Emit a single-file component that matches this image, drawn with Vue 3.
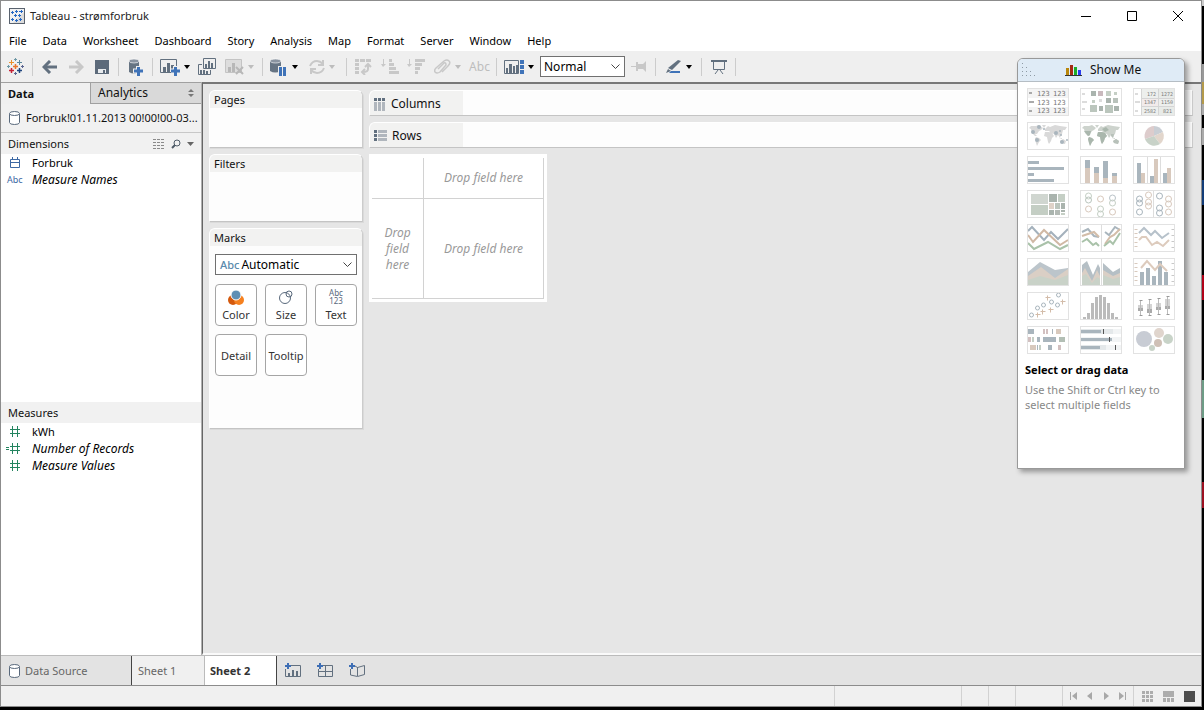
<script setup>
import { ref } from 'vue'

const menus = ['File', 'Data', 'Worksheet', 'Dashboard', 'Story', 'Analysis', 'Map', 'Format', 'Server', 'Window', 'Help']
const fit = ref('Normal')
const mark = ref('Automatic')

const S = '#a9b5bd'
const T = '#d8c9bd'
const G = '#c5cfc5'
const D = '#aab4ae'
const R = '#d2c0c0'
const L = '#dcdcdc'

const world = 'M2 6L4 4L9 4L12 3L16 6L14 8L12 9L10 12L8 12L10 14L8 14L5 11L4 7ZM15 3L19 3L17 6ZM9 15L12 16L14 18L12 20L10 24L9 21L8 17ZM18 10L22 10L25 11L27 14L25 16L24 19L22 22L21 20L20 15L17 14ZM18 9L18 7L21 4L23 5L28 3L33 4L40 5L38 8L36 8L35 12L34 13L33 16L31 13L29 16L27 12L24 11L22 9ZM33 19L36 17L39 19L38 22L34 21ZM32 16L35 16L35 17Z'

const ring = (x, y, s) => ({ x, y, r: 3, s })
const plus = (x, y) => ({ d: `M${x - 2} ${y}H${x + 3}M${x} ${y - 2}V${y + 3}`, s: '#d3bca9' })

const charts = [
  { name: 'text table', rects: [[1, 1, 40, 9, '#f4f4f4'], [1, 19, 40, 8, '#f4f4f4'], [2, 4, 3, 2, '#aaa'], [2, 13, 5, 2, '#aaa'], [2, 22, 3, 2, '#aaa']],
    texts: [[10, 8, '123'], [26, 8, '123'], [10, 17, '123'], [26, 17, '123'], [10, 25, '123'], [26, 25, '123']] },
  { name: 'heat map', rects: [[2, 5, 3, 2, L], [2, 13, 5, 2, L], [2, 20, 3, 2, L], [11, 3, 5, 5, D], [18, 3, 5, 5, '#c9b9bd'], [26, 3, 5, 5, G], [34, 4, 3, 3, G], [12, 12, 3, 3, G], [19, 11, 3, 3, L], [26, 10, 5, 5, D], [33, 10, 5, 5, '#b9c2bb'], [10, 17, 7, 7, '#bbc6bd'], [19, 18, 4, 5, D], [25, 17, 8, 8, '#bbc6bd'], [34, 18, 5, 5, D]] },
  { name: 'highlight table', rects: [[2, 5, 3, 2, L], [2, 13, 5, 2, L], [2, 22, 3, 2, L], [9, 1, 16, 9, '#edefed'], [26, 1, 15, 9, '#e8ebe8'], [9, 11, 16, 7, '#f2ebeb'], [26, 11, 15, 7, '#edefed'], [9, 19, 16, 8, '#edefed'], [26, 19, 15, 8, '#e8ebe8'], [8, 1, 1, 26, '#d5d5d5'], [25, 1, 1, 26, '#d5d5d5'], [8, 10, 33, 1, '#d5d5d5'], [8, 18, 33, 1, '#d5d5d5']],
    small: [[14, 8, '172'], [28, 8, '1272'], [11, 16, '1347'], [28, 16, '1150'], [11, 25, '2582'], [30, 25, '821']] },
  { name: 'symbol map', paths: [{ d: world, f: '#d9d9d9' }], circles: [[6, 10, 2, S], [12, 5, 2, S], [17, 7, 1, S], [10, 18, 2, S], [29, 11, 2, S], [33, 9, 1, S], [34, 13, 1, S], [35, 20, 2, S], [40, 18, 1, S]] },
  { name: 'filled map', paths: [{ d: world, f: '#cdd3cd' }, { d: 'M9 15L12 16L14 18L12 20L10 24L9 21L8 17ZM18 10L22 10L25 11L27 14L25 16L24 19L22 22L21 20L20 15L17 14ZM22 7L26 5L29 8L25 10ZM4 9L11 9L10 13L8 14Z', f: '#aab7ad' }, { d: 'M33 19L36 17L39 19L38 22L34 21ZM31 12L34 12L33 16L31 14Z', f: '#b8c1ba' }] },
  { name: 'pie chart', paths: [{ d: 'M21 14L12 17A10 10 0 0 1 21 4Z', f: '#ddcccc' }, { d: 'M21 14L21 4A10 10 0 0 1 30 10Z', f: '#c9ced4' }, { d: 'M21 14L30 10A10 10 0 0 1 27 22Z', f: '#e2d6cc' }, { d: 'M21 14L27 22A10 10 0 0 1 12 17Z', f: '#c8d2c8' }] },
  { name: 'horizontal bars', rects: [[1, 5, 11, 3, S], [1, 11, 36, 3, S], [1, 17, 6, 3, S], [1, 23, 26, 3, S]] },
  { name: 'stacked bars', rects: [[5, 4, 5, 8, S], [5, 12, 5, 15, T], [14, 11, 5, 6, S], [14, 17, 5, 10, T], [23, 5, 5, 17, S], [23, 22, 5, 5, T], [32, 17, 5, 3, S], [32, 20, 5, 7, T]] },
  { name: 'side-by-side bars', rects: [[4, 7, 4, 20, S], [8, 17, 4, 10, T], [14, 1, 1, 26, '#ddd'], [17, 20, 4, 7, S], [21, 3, 4, 24, T], [27, 1, 1, 26, '#ddd'], [30, 17, 4, 10, S], [34, 12, 4, 15, T]] },
  { name: 'treemap', rects: [[4, 4, 17, 10, '#d0d6d0'], [4, 15, 17, 10, '#c4cec4'], [22, 4, 8, 8, D], [31, 4, 7, 8, G], [22, 13, 5, 6, '#dfd2c8'], [28, 13, 5, 6, '#bcc5bd'], [34, 13, 4, 6, D], [22, 20, 5, 5, D], [28, 20, 5, 5, '#b3bab5'], [34, 20, 4, 2, D], [34, 23, 4, 2, G]] },
  { name: 'circle views', rings: [ring(8, 6, G), ring(8, 10, '#b9c5bd'), ring(8, 19, T), ring(20, 9, T), ring(20, 19, G), ring(20, 24, G), ring(32, 8, '#b9c2c7'), ring(32, 13, G), ring(32, 22, T)] },
  { name: 'side-by-side circles', rects: [[20, 1, 1, 26, '#ddd']], rings: [ring(6, 9, S), ring(6, 13, S), ring(6, 22, S), ring(15, 5, T), ring(15, 12, T), ring(15, 16, T), ring(26, 6, S), ring(26, 18, S), ring(26, 23, S), ring(35, 9, T), ring(35, 14, T), ring(35, 22, T)] },
  { name: 'continuous lines', paths: [{ d: 'M1 7L5 3L17 16L24 8L31 15L41 5', s: '#a4b1bc', w: 1 }, { d: 'M1 11L6 18L17 6L33 21L41 16', s: '#d0b8a4', w: 1 }, { d: 'M1 19L7 25L21 18L33 25L41 21', s: '#a9c2a9', w: 1 }] },
  { name: 'discrete lines', rects: [[21, 1, 1, 26, '#ddd']], paths: [{ d: 'M2 8L8 5L14 12L19 13M25 8L29 11L35 3L40 6', s: S, w: 1 }, { d: 'M2 12L14 8L19 13M25 20L30 13L34 11L40 5', s: '#d3bda9', w: 1 }, { d: 'M2 18L7 15L13 21L16 19L19 22M24 22L30 17L33 20L40 9', s: '#a9c2a9', w: 1 }] },
  { name: 'dual lines', paths: [{ d: 'M6 9L11 4L18 11L22 7L29 14L36 9', s: '#b6c1ca', w: 1 }, { d: 'M6 16L9 13L13 13L19 21L24 18L30 22L36 16', s: '#ddcbbd', w: 1 }, { d: 'M1 5H4M1 9H4M1 13H4M1 18H4M1 22H4', s: T }, { d: 'M38 5H41M38 11H41M38 17H41M38 23H41', s: '#c8c8c8' }] },
  { name: 'continuous area', paths: [{ d: 'M1 14L13 4L28 12L41 10V27H1Z', f: '#bcc5cb' }, { d: 'M1 18L14 9L28 20L41 11V27H1Z', f: '#dacfc5' }, { d: 'M1 22L13 18L28 22L41 17V27H1Z', f: '#c9d2c8' }] },
  { name: 'discrete area', rects: [[21, 1, 1, 26, '#ddd']], paths: [{ d: 'M2 7L7 3L13 17L18 6L20 10V27H2ZM23 5L33 14L40 10V27H23Z', f: '#b5bfc5' }, { d: 'M2 15L5 10L12 23L17 12L20 18V27H2ZM23 12L33 18L40 15V27H23Z', f: '#dacfc5' }, { d: 'M2 18L6 16L12 25L17 19L20 21V27H2ZM23 17L33 21L40 19V27H23Z', f: '#c9d2c8' }] },
  { name: 'dual combination', rects: [[7, 14, 4, 13, S], [13, 10, 4, 17, S], [19, 18, 4, 9, S], [25, 3, 4, 24, S], [31, 14, 4, 13, S]], paths: [{ d: 'M8 10L14 3L22 12L27 6L34 13', s: '#ddcbbd', w: 1 }, { d: 'M1 5H4M1 9H4M1 13H4M1 18H4M1 22H4', s: T }, { d: 'M38 5H41M38 11H41M38 17H41M38 23H41', s: '#c8c8c8' }] },
  { name: 'scatter plot', rings: [{ x: 4, y: 23, r: 2, s: S }, { x: 10, y: 16, r: 2, s: S }, { x: 16, y: 13, r: 2, s: S }, { x: 24, y: 10, r: 2, s: S }, { x: 30, y: 13, r: 2, s: S }, { x: 31, y: 3, r: 2, s: S }], paths: [plus(20, 5), plus(35, 9), plus(15, 19), plus(23, 17), plus(10, 22)] },
  { name: 'histogram', rects: [[3, 25, 3, 2, '#bbb'], [7, 21, 3, 6, '#bbb'], [11, 11, 3, 16, '#bbb'], [15, 5, 3, 22, '#bbb'], [19, 3, 3, 24, '#bbb'], [23, 5, 3, 22, '#bbb'], [27, 11, 3, 16, '#bbb'], [31, 21, 3, 6, '#bbb'], [35, 25, 3, 2, '#bbb']] },
  { name: 'box-and-whisker plot', paths: [{ d: 'M7 8V23M16 7V23M25 6V22M34 4V22', s: '#bbb' }, { d: 'M6 8H9M15 7H18M24 6H27M33 4H36M6 23H9M15 23H18M24 22H27M33 22H36', s: '#999' }], rects: [[5, 13, 5, 3, '#d4d4d4'], [5, 16, 5, 3, '#aaa'], [14, 12, 5, 5, '#d4d4d4'], [14, 17, 5, 4, '#aaa'], [23, 11, 5, 4, '#d4d4d4'], [23, 15, 5, 3, '#aaa'], [32, 7, 5, 7, '#d4d4d4'], [32, 14, 5, 3, '#aaa']] },
  { name: 'gantt', rects: [[1, 3, 6, 5, S], [16, 3, 2, 5, R], [19, 3, 2, 5, R], [25, 3, 1, 5, S], [29, 3, 5, 5, T], [1, 11, 3, 5, R], [5, 11, 2, 5, G], [10, 11, 3, 5, S], [16, 11, 13, 5, S], [32, 11, 6, 5, '#b3bfb5'], [3, 19, 6, 5, T], [10, 19, 1, 5, S], [12, 19, 2, 5, G], [21, 19, 4, 5, S], [31, 19, 3, 5, R]] },
  { name: 'bullet graph', rects: [[1, 3, 40, 5, '#f2f4f5'], [1, 3, 32, 5, '#e4e8ea'], [1, 4, 20, 3, S], [23, 3, 1, 5, '#555'], [1, 11, 40, 5, '#f2f4f5'], [1, 12, 31, 3, S], [29, 11, 1, 5, '#555'], [1, 19, 40, 5, '#f2f4f5'], [1, 19, 25, 5, '#e4e8ea'], [1, 20, 19, 3, S], [35, 19, 1, 5, '#555']] },
  { name: 'packed bubbles', circles: [[11, 13, 8, '#c8ccd4'], [26, 7, 5, '#e0d5cd'], [35, 13, 5, '#c8d3c8'], [25, 17, 4, '#cfc0b6'], [19, 22, 3, '#c8d3c8']] }
]
</script>

<template>
  <div class="window">
    <header class="title">
      <svg class="app" width="16" height="16" viewBox="0 0 16 16"><rect x=".5" y=".5" width="15" height="15" fill="#f0f0f0" stroke="#59626e" /><path d="M15 4V15H4Z" fill="#dcdcdc" /><path d="M2 4.500H5M3.500 3V6M6 3.500H9M7.500 2V5M10 3.500H14M12.500 2V5M5 7.500H8M6.500 6V9M9 7.500H12M10.500 6V9M2 11.500H5M3.500 10V13M6 12.500H9M7.500 11V14M10 11.500H13M11.500 10V13" stroke="#2467c4" /></svg>
      <h1>Tableau - strømforbruk</h1>
      <div class="controls">
        <button aria-label="Minimize"><svg width="10" height="10"><path d="M0 5.500H10" stroke="#000" /></svg></button>
        <button aria-label="Maximize"><svg width="10" height="10"><path d="M.5.5H9.500V9.500H.5Z" stroke="#000" fill="none" /></svg></button>
        <button aria-label="Close"><svg width="10" height="10"><path d="M0 0L10 10M10 0L0 10" stroke="#000" /></svg></button>
      </div>
    </header>

    <nav class="menu"><button v-for="m in menus" :key="m">{{ m }}</button></nav>

    <div class="toolbar" role="toolbar">
      <button aria-label="Start page"><svg width="17" height="17" viewBox="0 0 17 17" fill="none" stroke-width="1"><path d="M6 8.500H11M8.500 6V11" stroke="#e8762c" stroke-width="1.500" /><path d="M2 4.500H7M4.500 2V7" stroke="#eb912c" /><path d="M10 4.500H15M12.500 2V7" stroke="#5b879b" /><path d="M2 12.500H7M4.500 10V15" stroke="#c72035" stroke-width="1.500" /><path d="M10 12.500H15M12.500 10V15" stroke="#1f457e" stroke-width="1.500" /><path d="M7 1.500H10M8.500 0V3" stroke="#7099a6" /><path d="M7 15.500H10M8.500 14V17" stroke="#5b6591" /><path d="M0 8.500H3M1.500 7V10" stroke="#7099a6" /><path d="M14 8.500H17M15.500 7V10" stroke="#5b6591" /></svg></button>
      <i></i>
      <button aria-label="Undo"><svg width="16" height="14" fill="none" stroke="#62707f" stroke-width="3"><path d="M2 7H15" /><path d="M8 1L2 7L8 13" /></svg></button>
      <button aria-label="Redo"><svg width="16" height="14" fill="none" stroke="#c8c8c8" stroke-width="3"><path d="M1 7H14" /><path d="M8 1L14 7L8 13" /></svg></button>
      <button aria-label="Save"><svg width="14" height="14"><path d="M0 0H14V14H0Z" fill="#5c6a7a" /><path d="M3 9H11V13H3Z" fill="#e8ebee" /><path d="M8 10H10V13H8Z" fill="#5c6a7a" /></svg></button>
      <i></i>
      <button aria-label="New data source"><svg width="17" height="18"><path d="M2 3V14Q7 17 12 14V3Z" fill="#667483" /><ellipse cx="7" cy="3" rx="5" ry="2" fill="#8993a0" stroke="#fff" stroke-width=".6" /><path d="M6 13H17M11.500 8V18" stroke="#efefef" stroke-width="5" /><path d="M7 13H16M11.500 9V18" stroke="#3f73b8" stroke-width="3" /></svg></button>
      <i></i>
      <button aria-label="New worksheet"><svg width="20" height="18"><path d="M.5 1.500H16.500V14.500H.5Z" fill="none" stroke="#62707f" /><path d="M3 9H6V14H3ZM7 5H10V14H7ZM11 7H14V14H11Z" fill="#62707f" /><path d="M11 13H20M15.500 8V18" stroke="#efefef" stroke-width="5" /><path d="M11 13H20M15.500 9V18" stroke="#3f73b8" stroke-width="3" /></svg><b class="caret"></b></button>
      <button aria-label="Duplicate"><svg width="18" height="17"><path d="M5.500.5H17.500V10.500H5.500ZM4 6.500H.5V16.500H12.500V12" fill="none" stroke="#62707f" /><path d="M7 6H9V10H7ZM10 3H12V10H10ZM13 5H15V10H13ZM2 12H4V16H2ZM5 12H7V16H5ZM8 13H10V16H8Z" fill="#62707f" /></svg></button>
      <button aria-label="Clear sheet"><svg width="19" height="18"><path d="M.5 1.500H16.500V14.500H.5Z" fill="#ddd" stroke="#c4c4c4" /><path d="M3 9H6V14H3ZM7 5H10V14H7Z" fill="#b8b8b8" /><path d="M11 9L18 16M18 9L11 16" stroke="#b8b8b8" stroke-width="2" /></svg><b class="caret off"></b></button>
      <i></i>
      <button aria-label="Pause updates"><svg width="18" height="18"><path d="M0 3V13Q5 16 11 13V3Z" fill="#667483" /><ellipse cx="5.500" cy="3" rx="5.500" ry="2" fill="#8993a0" stroke="#fff" stroke-width=".6" /><path d="M8 8H17V18H8Z" fill="#efefef" /><path d="M9 9H12V18H9ZM13 9H16V18H13Z" fill="#3f73b8" /></svg><b class="caret"></b></button>
      <button class="start" aria-label="Refresh"><svg width="16" height="16" fill="none" stroke="#c8c8c8" stroke-width="2"><path d="M1 7Q3 2 8 2Q11 2 14 5M14 1V6H9M15 9Q13 14 8 14Q5 14 2 11M2 15V10H7" /></svg><b class="caret off"></b></button>
      <i></i>
      <button aria-label="Swap"><svg width="17" height="16" fill="#c8c8c8"><path d="M0 0H4V3H0ZM5 0H10V3H5ZM11 0H16V3H11ZM0 4H4V7H0ZM0 8H4V11H0ZM0 12H4V15H0Z" /><path d="M13 7V10Q13 13 8 13M10 8L13 5L16 8M10 10L7 13L10 16" fill="none" stroke="#c8c8c8" stroke-width="2" /></svg></button>
      <button aria-label="Sort ascending"><svg width="18" height="15" fill="#c8c8c8"><path d="M2 0H3V5H5L2 8L0 5H2ZM8 0H11V3H8ZM8 4H13V7H8ZM8 8H15V11H8ZM8 12H18V15H8Z" /></svg></button>
      <button aria-label="Sort descending"><svg width="18" height="15" fill="#c8c8c8"><path d="M2 0H3V5H5L2 8L0 5H2ZM8 0H18V3H8ZM8 4H15V7H8ZM8 8H13V11H8ZM8 12H11V15H8Z" /></svg></button>
      <button aria-label="Group members"><svg width="17" height="16" fill="none" stroke="#c8c8c8" stroke-width="1.500"><path d="M4 10L10 4Q12 3 12 6L6 13Q3 15 1 13Q0 11 2 9L10 2Q13 0 15 2Q17 4 14 7L8 13" /></svg><b class="caret off"></b></button>
      <button class="disabled" disabled>Abc</button>
      <i></i>
      <button aria-label="Show Me cards"><svg width="20" height="14"><path d="M.5.5H14.500V13.500H.5Z" fill="none" stroke="#62707f" /><path d="M2 8H4V13H2ZM5 4H8V13H5ZM9 6H11V13H9ZM12 5H14V13H12Z" fill="#62707f" /><path d="M16 0H20V4H16ZM16 5H20V9H16ZM16 10H20V14H16Z" fill="#3f73b8" /></svg><b class="caret"></b></button>
      <div class="select fit">
        <select v-model="fit" aria-label="Fit"><option>Normal</option><option>Fit Width</option><option>Entire View</option></select>
        <svg width="9" height="6"><path d="M.5.5L4.500 4.500L8.500.5" fill="none" stroke="#444" /></svg>
      </div>
      <button aria-label="Fix axes"><svg width="16" height="11" fill="#c8c8c8"><path d="M0 5H5V1H7V3H12L15 0V11L12 8H7V10H5V6H0Z" /></svg></button>
      <i></i>
      <button aria-label="Highlight"><svg width="16" height="15"><path d="M2 9L12 1L15 2L6 11Z" fill="#62707f" /><path d="M0 14L2 10L5 12Z" fill="#62707f" /><path d="M5 12H14V14H3Z" fill="#3f73b8" /></svg><b class="caret"></b></button>
      <i></i>
      <button aria-label="Presentation mode"><svg width="16" height="15" fill="none" stroke="#62707f"><path d="M0 2H16" stroke-width="2" /><path d="M2.500 3V10.500H13.500V3M7 11L4 15M9 11L12 15" /></svg></button>
      <i></i>
    </div>

    <div class="body">
      <aside>
        <div class="tabs">
          <button class="on">Data</button>
          <button class="big">Analytics <svg width="6" height="8" fill="#777"><path d="M0 3L3 0L6 3ZM0 5L3 8L6 5Z" /></svg></button>
        </div>
        <div class="source">
          <svg width="11" height="14" fill="#fff" stroke="#59697c"><path d="M.5 2.500V11.500Q.5 13.500 5.500 13.500Q10.500 13.500 10.500 11.500V2.500" /><ellipse cx="5.500" cy="2.500" rx="5" ry="2" /></svg>
          <span>Forbruk!01.11.2013 00!00!00-03...</span>
        </div>
        <section class="dims">
          <h2>Dimensions
            <span class="tools">
              <svg width="12" height="10"><path d="M0 .5H12M0 3.500H12M0 6.500H12M0 9.500H12" stroke="#8a8a8a" stroke-dasharray="3 1" /></svg>
              <svg width="10" height="10" fill="none" stroke="#4f5b68"><circle cx="6" cy="4" r="3" /><path d="M4 6L1 9" stroke-width="2" /></svg>
              <svg width="7" height="4"><path d="M0 0H7L3.500 4Z" fill="#666" /></svg>
            </span>
          </h2>
          <ul>
            <li><svg width="10" height="11" fill="none" stroke="#3c68a4"><path d="M.5 2.500H9.500V10.500H.5ZM0 5.500H10M2.500 0V2M7.500 0V2" /></svg>Forbruk</li>
            <li class="it"><small>Abc</small>Measure Names</li>
          </ul>
        </section>
        <section>
          <h2>Measures</h2>
          <ul>
            <li v-for="(m, i) in ['kWh', 'Number of Records', 'Measure Values']" :key="m" :class="{ it: i }">
              <svg width="14" height="11" stroke="#23845f"><path d="M4 3.500H14M4 7.500H14M6.500 0V11M11.500 0V11" /><path v-if="i === 1" d="M0 4.500H3M0 6.500H3" /></svg>{{ m }}
            </li>
          </ul>
        </section>
      </aside>

      <main>
        <div class="cards">
          <section class="card pages"><h2>Pages</h2></section>
          <section class="card filters"><h2>Filters</h2></section>
          <section class="card marks">
            <h2>Marks</h2>
            <div class="select type">
              <span>Abc</span>
              <select v-model="mark" aria-label="Mark type"><option>Automatic</option><option>Bar</option><option>Line</option></select>
              <svg width="9" height="6"><path d="M.5.5L4.500 4.500L8.500.5" fill="none" stroke="#444" /></svg>
            </div>
            <div class="buttons">
              <button><svg width="16" height="15"><circle cx="5" cy="10" r="5" fill="#d4590d" /><circle cx="11" cy="10" r="5" fill="#f5801f" /><circle cx="8" cy="5" r="5" fill="#5f8fb4" stroke="#fff" /></svg>Color</button>
              <button><svg width="14" height="15" fill="none" stroke="#59697c"><circle cx="6" cy="8" r="5.500" /><circle cx="10" cy="4" r="3" /></svg>Size</button>
              <button><span class="abc">Abc</span><span class="abc last">123</span>Text</button>
              <button>Detail</button>
              <button>Tooltip</button>
            </div>
          </section>
        </div>
        <div class="view">
          <div class="shelf"><h2><svg width="12" height="13"><path d="M0 0H3V3H0ZM4 0H7V3H4ZM8 0H11V3H8Z" fill="#62707f" /><path d="M0 4H3V13H0ZM4 4H7V13H4ZM8 4H11V13H8Z" fill="#b0b6bd" /></svg>Columns</h2></div>
          <div class="shelf"><h2><svg width="13" height="12"><path d="M0 0H3V3H0ZM0 4H3V7H0ZM0 8H3V11H0Z" fill="#62707f" /><path d="M4 0H13V3H4ZM4 4H13V7H4ZM4 8H13V11H4Z" fill="#b0b6bd" /></svg>Rows</h2></div>
          <div class="canvas"><div></div><div>Drop field here</div><div>Drop field here</div><div>Drop field here</div></div>
        </div>
      </main>
    </div>

    <nav class="sheets">
      <button class="ds"><svg width="11" height="14" fill="#fff" stroke="#59697c"><path d="M.5 2.500V11.500Q.5 13.500 5.500 13.500Q10.500 13.500 10.500 11.500V2.500" /><ellipse cx="5.500" cy="2.500" rx="5" ry="2" /></svg>Data Source</button>
      <button class="s1">Sheet 1</button>
      <button class="s2">Sheet 2</button>
      <button class="add" aria-label="New worksheet tab"><svg width="16" height="15"><path d="M6 2.500H15.500V13.500H.5V6" fill="none" stroke="#62707f" /><path d="M3 10H5V13H3ZM7 7H9V13H7ZM11 8H13V13H11Z" fill="#62707f" /><path d="M0 3H6M3 0V6" stroke="#3f6fb5" stroke-width="2" /></svg></button>
      <button class="add" aria-label="New dashboard"><svg width="16" height="15"><path d="M6 2.500H15.500V13.500H1.500V6M1 8.500H15M8.500 3V13" fill="none" stroke="#62707f" /><path d="M0 3H6M3 0V6" stroke="#3f6fb5" stroke-width="2" /></svg></button>
      <button class="add" aria-label="New story"><svg width="16" height="15"><path d="M6 3L8.500 4.500L15.500 2.500V11.500L8.500 13.500L1.500 12V6M8.500 4V13" fill="none" stroke="#62707f" /><path d="M0 3H6M3 0V6" stroke="#3f6fb5" stroke-width="2" /></svg></button>
    </nav>

    <footer>
      <span class="wide"></span><span></span><span></span><span class="mid"></span>
      <div class="pager">
        <button aria-label="First"><svg width="8" height="8" fill="#a8a8a8"><path d="M0 0H1V8H0ZM7 0V8L2 4Z" /></svg></button>
        <button aria-label="Previous"><svg width="8" height="8" fill="#a8a8a8"><path d="M6 0V8L1 4Z" /></svg></button>
        <button aria-label="Next"><svg width="8" height="8" fill="#a8a8a8"><path d="M2 0V8L7 4Z" /></svg></button>
        <button aria-label="Last"><svg width="8" height="8" fill="#a8a8a8"><path d="M1 0V8L6 4ZM7 0H8V8H7Z" /></svg></button>
      </div>
      <div class="modes">
        <button aria-label="Sheet sorter"><svg width="11" height="11" fill="#adadad"><path d="M0 0H3V3H0ZM4 0H7V3H4ZM8 0H11V3H8ZM0 4H3V7H0ZM4 4H7V7H4ZM8 4H11V7H8ZM0 8H3V11H0ZM4 8H7V11H4ZM8 8H11V11H8Z" /></svg></button>
        <button aria-label="Filmstrip"><svg width="11" height="11" fill="#adadad"><path d="M0 0H11V6H0ZM0 7H3V11H0ZM4 7H7V11H4ZM8 7H11V11H8Z" /></svg></button>
        <button aria-label="Tabs"><svg width="11" height="11"><path d="M0 0H11V11H0Z" fill="#4d4d4d" /></svg></button>
      </div>
    </footer>

    <section class="showme">
      <h2>
        <svg class="grip" width="15" height="14" fill="#8f9ba5"><path d="M0 0H1V1H0ZM0 4H1V5H0ZM4 4H5V5H4ZM0 8H1V9H0ZM4 8H5V9H4ZM8 8H9V9H8ZM0 12H1V13H0ZM4 12H5V13H4ZM8 12H9V13H8ZM12 12H13V13H12Z" /></svg>
        <svg width="17" height="13"><path d="M1 4H4V11H1Z" fill="#b8860b" /><path d="M5 1H8V11H5Z" fill="#a52a12" /><path d="M9 3H12V11H9Z" fill="#1fae2a" /><path d="M13 6H16V11H13Z" fill="#2a3cf0" /><path d="M0 11.500H17" stroke="#333" /></svg>
        Show Me
      </h2>
      <div class="thumbs">
        <button v-for="c in charts" :key="c.name" :aria-label="c.name">
          <svg width="42" height="28" viewBox="0 0 42 28">
            <rect v-for="(r, i) in c.rects" :key="'r' + i" :x="r[0]" :y="r[1]" :width="r[2]" :height="r[3]" :fill="r[4]" />
            <path v-for="(p, i) in c.paths" :key="'p' + i" :d="p.d" :fill="p.f || 'none'" :stroke="p.s || 'none'" :stroke-width="p.w ? 2 : 1" :transform="p.s && !p.w ? 'translate(.5 .5)' : null" />
            <circle v-for="(o, i) in c.circles" :key="'c' + i" :cx="o[0]" :cy="o[1]" :r="o[2]" :fill="o[3]" />
            <circle v-for="(o, i) in c.rings" :key="'o' + i" :cx="o.x + 0.5" :cy="o.y" :r="o.r" fill="none" :stroke="o.s" />
            <text v-for="(t, i) in c.texts" :key="'t' + i" :x="t[0]" :y="t[1]" class="num">{{ t[2] }}</text>
            <text v-for="(t, i) in c.small" :key="'s' + i" :x="t[0]" :y="t[1]" class="num tiny">{{ t[2] }}</text>
            <rect x=".5" y=".5" width="41" height="27" fill="none" stroke="#e2e2e2" />
          </svg>
        </button>
      </div>
      <h3>Select or drag data</h3>
      <p>Use the Shift or Ctrl key to select multiple fields</p>
    </section>
  </div>
</template>

<style>
html { background: #000; }
body {
  min-height: 100vh;
  background: linear-gradient(#ccc 0 6px, #000 6px 64px, #999 64px 82px, #b49a4a 82px 104px, #aaa 104px 115px, #000 115px 128px, #aaa 128px 145px, #000 145px 180px, #123c78 180px 205px, #000 205px 275px, #b00018 275px 300px, #000 300px 380px, #6d9c86 380px 418px, #000 418px 482px, #9c1020 482px 508px, #000 508px);
}
</style>

<style scoped>
* { box-sizing: border-box; margin: 0; padding: 0; font-family: "Noto Sans", "Open Sans", sans-serif; }
button { border: 0; background: none; font-size: 11px; line-height: 16px; color: inherit; display: flex; align-items: center; justify-content: center; white-space: nowrap; }
svg { display: block; flex: none; }
h1, h2 { font-size: 11px; font-weight: 400; }
ul { list-style: none; }
.window { position: relative; display: flex; flex-direction: column; height: calc(100vh - 3px); margin-right: 2px; border: 1px solid #8c8c8c; background: #fff; font-size: 11px; line-height: 16px; color: #111; }
.title { display: flex; align-items: center; height: 30px; padding-left: 8px; }
.title h1 { margin-left: 5px; color: #222; }
.controls { display: flex; margin-left: auto; }
.controls button { width: 46px; height: 28px; }
.menu { display: flex; height: 20px; padding-left: 8px; gap: 16px; color: #000; }
.toolbar { display: grid; height: 31px; background: #efefef; align-items: center; grid-template-columns: 29px 5px 29px 24px 28px 5px 29px 5px 40px 24px 41px 5px 38px 41px 5px 28px 26px 26px 36px 29px 5px 40px 86px 28px 5px 41px 5px 29px 5px; }
.toolbar .start { justify-content: flex-start; padding-left: 6px; }
.toolbar i { justify-self: center; width: 1px; height: 18px; background: #ccc; }
.caret { margin-left: 4px; border: 3px solid transparent; border-top: 4px solid #000; border-bottom: 0; }
.caret.off { border-top-color: #bdbdbd; }
.disabled { font-size: 12px; color: #bdbdbd; }
.select { position: relative; display: flex; align-items: center; border: 1px solid #707070; background: #fff; }
.select select { flex: 1; min-width: 0; height: 100%; border: 0; background: none; appearance: none; font-size: 12px; color: #000; }
.select svg { position: absolute; right: 4px; top: 7px; pointer-events: none; }
.fit { height: 21px; margin-left: 1px; }
.fit select { padding-left: 3px; }
.body { flex: 1; display: flex; min-height: 0; }
aside { display: flex; flex-direction: column; width: 201px; border-right: 1px solid #b0b0b0; }
.tabs { display: flex; height: 22px; background: #efefef; }
.tabs button { flex: 1; justify-content: space-between; padding: 0 7px; background: #d9d9d9; border: 1px solid #a0a0a0; border-right: 0; }
.tabs .big { font-size: 12px; }
.tabs .on { flex: none; width: 89px; font-weight: 700; background: #f0f0f0; border-width: 1px 0 0; }
.source { display: flex; align-items: center; gap: 6px; height: 29px; padding-left: 8px; background: #f1f1f1; border-bottom: 1px solid #c8c8c8; white-space: nowrap; }
.dims { flex: 1; }
aside h2 { display: flex; align-items: center; height: 21px; padding: 0 7px; background: #f1f1f1; }
aside section:last-child { height: 253px; }
.tools { display: flex; align-items: center; gap: 6px; margin-left: auto; }
li { display: grid; grid-template-columns: 16px auto; column-gap: 12px; align-items: center; justify-content: start; height: 17px; padding-left: 3px; color: #000; }
li svg { justify-self: end; }
li small { padding-left: 3px; font-size: 9px; color: #3c68a4; }
.it { font-size: 12px; font-style: italic; }
.it small { font-style: normal; }
main { flex: 1; display: flex; gap: 6px; min-width: 0; padding: 6px 8px 6px 6px; background: #e6e6e6; border-left: 1px solid #666; border-top: 2px solid #777; border-bottom: 2px solid #fafafa; }
.cards { display: flex; flex-direction: column; gap: 6px; width: 154px; flex: none; }
.card { background: #fdfdfd; border: 1px solid #fff; border-right-color: #ccc; border-bottom-color: #c4c4c4; border-radius: 6px 6px 0 0; box-shadow: 1px 1px 0 #dadada; }
.card h2 { height: 17px; padding: 1px 0 0 4px; background: #f2f2f1; border-radius: 5px 5px 0 0; }
.pages { height: 58px; }
.filters { height: 68px; }
.marks { height: 201px; }
.type { margin: 8px 5px 9px; height: 21px; }
.type span { padding-left: 4px; color: #5a8aac; font-weight: 500; }
.type select { padding-left: 2px; }
.buttons { display: flex; flex-wrap: wrap; gap: 8px; padding-left: 5px; }
.buttons button { flex-direction: column; width: 42px; height: 42px; padding-top: 2px; border: 1px solid #a5a5a5; border-radius: 4px; background: #fff; color: #333; gap: 2px; }
.abc { margin-bottom: -2px; font-size: 8px; line-height: 8px; color: #59697c; }
.abc.last { margin-bottom: 0; }
.view { flex: 1; min-width: 0; display: flex; flex-direction: column; gap: 6px; }
.shelf { height: 26px; background: #fdfdfd; border: 1px solid #fff; border-bottom-color: #c4c4c4; border-right-color: #ccc; border-radius: 6px 0 0 0; }
.shelf h2 { display: flex; align-items: center; gap: 5px; width: 93px; height: 100%; padding: 2px 0 0 4px; background: #f2f2f1; border-radius: 5px 0 0 0; font-size: 12px; }
.canvas { display: grid; grid-template-columns: 52px 120px; grid-template-rows: 41px 100px; width: 178px; height: 148px; padding: 4px 3px; background: #fff; color: #999; font-size: 12px; font-style: italic; text-align: center; }
.canvas div { display: flex; align-items: center; justify-content: center; padding: 0 8px; border-right: 1px solid #d2d2d2; border-bottom: 1px solid #d2d2d2; }
.sheets { display: flex; height: 30px; background: #e3e3e3; border-top: 1px solid #bbb; color: #666; }
.sheets button { justify-content: flex-start; }
.ds { width: 131px; padding-left: 8px; gap: 5px; border-right: 1px solid #444; }
.s1 { width: 73px; padding-left: 6px; background: #f0f0f0; border-right: 1px solid #bbb; }
.s2 { width: 72px; padding-left: 5px; background: #fff; font-weight: 700; color: #333; border-right: 1px solid #444; }
.sheets button:nth-child(-n+3) { border-right-style: solid; border-right-width: 1px; }
.sheets .add { width: 32px; justify-content: flex-end; }
.sheets .s2 + .add { width: 24px; }
footer { display: flex; justify-content: flex-end; height: 21px; background: #f0f0f0; border-top: 1px solid #8c8c8c; }
footer > * { width: 27px; border-left: 1px solid #d2d2d2; }
footer .wide { width: 127px; }
footer .mid { width: 47px; }
footer .pager { display: flex; width: 71px; padding-left: 3px; }
.pager button { width: 16px; }
footer .modes { display: flex; width: 68px; padding-left: 3px; }
.modes button { width: 21px; }
.showme { position: absolute; top: 57px; right: 16px; width: 168px; height: 411px; background: #fff; border: 1px solid #999; border-radius: 6px 6px 0 0; box-shadow: 3px 3px 5px rgba(0, 0, 0, .35); }
.showme h2 { display: flex; align-items: center; gap: 8px; height: 23px; padding-left: 4px; background: #dfebf6; border-bottom: 1px solid #b5bdc4; border-radius: 5px 5px 0 0; font-size: 12px; }
.grip { margin-right: 20px; }
.thumbs { display: grid; grid-template-columns: repeat(3, 42px); gap: 6px 11px; padding: 6px 9px 8px; }
.thumbs button { height: 28px; }
.num { font: 7px "DejaVu Sans Mono", monospace; fill: #777; }
.tiny { font-size: 5px; }
.showme h3 { padding-left: 7px; font-size: 11px; color: #000; }
.showme p { padding: 4px 7px; line-height: 15px; color: #888; }
</style>
